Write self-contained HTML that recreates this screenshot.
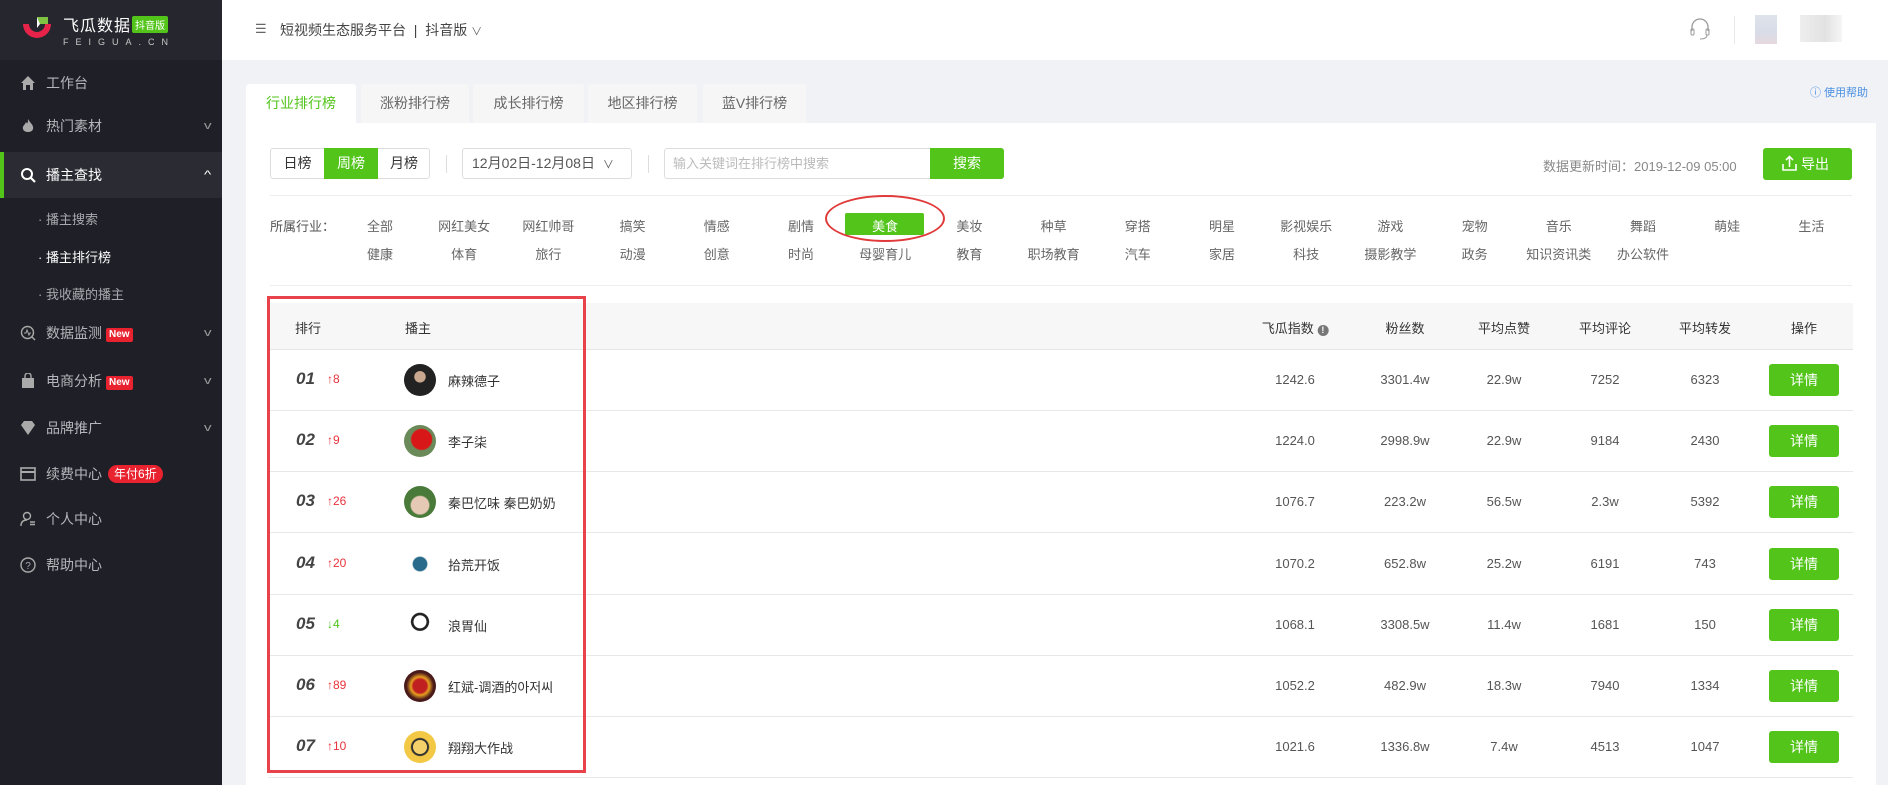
<!DOCTYPE html>
<html><head><meta charset="utf-8"><style>
*{margin:0;padding:0;box-sizing:border-box}
body{width:1888px;height:785px;overflow:hidden;background:#f0f2f5;font-family:"Liberation Sans","Noto Sans CJK SC",sans-serif;font-size:13px;color:#333;position:relative}
.abs{position:absolute}
#side{left:0;top:0;width:222px;height:785px;background:#1f1f27}
#logo{left:0;top:0;width:222px;height:60px;background:#26262e}
.nav{position:absolute;left:0;width:222px;height:46px;color:#b5b5bb;font-size:14px;line-height:46px;padding-left:46px}
.nav .ic{position:absolute;left:20px;top:15px;width:16px;height:16px}
.nav .ar{position:absolute;right:12px;top:0;font-size:11px;color:#999;transform:scaleX(1.4)}
.sub{position:absolute;left:38px;color:#a8a8ae;font-size:13px}
.new{display:inline-block;background:#e8222f;color:#fff;font-size:10px;line-height:14px;padding:0 3px;border-radius:2px;margin-left:4px;vertical-align:1px;font-weight:bold}
#hdr{left:222px;top:0;width:1666px;height:60px;background:#fff}
.tab{position:absolute;top:84px;height:39px;background:#f6f6f7;color:#666;font-size:14px;line-height:39px;text-align:center;border-radius:3px 3px 0 0}
#card{left:246px;top:123px;width:1630px;height:662px;background:#fff}
.ind{position:absolute;font-size:13px;color:#666;transform:translateX(-50%);white-space:nowrap}
.th{position:absolute;top:318px;font-size:13px;color:#333;transform:translateX(-50%);white-space:nowrap}
.row{position:absolute;left:268px;width:1585px;height:61px;border-bottom:1px solid #e8e8e8}
.c{position:absolute;top:22px;font-size:13px;color:#555;transform:translateX(-50%)}
.rk{position:absolute;left:28px;top:19px;font-size:17px;font-weight:bold;font-style:italic;color:#444}
.ch{position:absolute;left:59px;top:22px;font-size:12px;color:#e8323c}
.av{position:absolute;left:136px;top:14px;width:32px;height:32px;border-radius:50%}
.nm{position:absolute;left:180px;top:21px;font-size:13px;color:#333}
.btn{position:absolute;left:1501px;top:14px;width:70px;height:32px;background:#52c41a;color:#fff;border-radius:3px;text-align:center;line-height:32px;font-size:14px}
</style></head><body>
<div id="side" class="abs"></div>
<div id="logo" class="abs">
<svg class="abs" style="left:20px;top:16px" width="34" height="28" viewBox="0 0 34 28"><path d="M3 8 A13.5 13.5 0 0 0 31 8 L25 8 A8 8 0 0 1 9 8 Z" fill="#e8234a"/><path d="M17 1 L28 1 L28 8 L20 8 Z" fill="#7fc242"/><path d="M17 1 L17 12 L20 8Z" fill="#fff"/></svg>
<div class="abs" style="left:63px;top:12px;color:#fff;font-size:16px;letter-spacing:1px">飞瓜数据</div>
<div class="abs" style="left:132px;top:16px;background:#52c41a;color:#fff;font-size:10px;padding:1px 3px;border-radius:2px">抖音版</div>
<div class="abs" style="left:63px;top:37px;color:#c8c8c8;font-size:9px;letter-spacing:7px">FEIGUA.CN</div>
</div>
<div class="nav" style="top:60px"><svg class="ic" viewBox="0 0 16 16"><path d="M8 1 L15 8 L13 8 L13 15 L10 15 L10 10 L6 10 L6 15 L3 15 L3 8 L1 8Z" fill="#aaa"/></svg>工作台</div>
<div class="nav" style="top:103px"><svg class="ic" viewBox="0 0 16 16"><path d="M8 1 C10 5 14 7 13 11 C12 15 4 15 3 11 C2 8 5 7 6 4 C7 6 8 6 8 1Z" fill="#aaa"/></svg>热门素材<span class="ar">v</span></div>
<div class="nav" style="top:152px;background:#2b2b33;color:#fff;border-left:4px solid #52c41a;padding-left:42px"><svg class="ic" style="left:16px" viewBox="0 0 16 16"><circle cx="7" cy="7" r="5" stroke="#fff" stroke-width="2" fill="none"/><path d="M10.5 10.5 L15 15" stroke="#fff" stroke-width="2.2"/></svg><b style="font-weight:normal">播主查找</b><span class="ar" style="color:#fff">^</span></div>
<div class="sub" style="top:209px">· 播主搜索</div>
<div class="sub" style="top:247px;color:#fff">· 播主排行榜</div>
<div class="sub" style="top:284px">· 我收藏的播主</div>
<div class="nav" style="top:310px"><svg class="ic" viewBox="0 0 16 16"><circle cx="7.5" cy="7.5" r="6" stroke="#aaa" stroke-width="1.4" fill="none"/><path d="M4 8 L6 8 L7 5 L9 10 L10 8 L11 8" stroke="#aaa" fill="none"/><path d="M12 12 L15 15" stroke="#aaa" stroke-width="1.4"/></svg>数据监测<span class="new">New</span><span class="ar">v</span></div>
<div class="nav" style="top:358px"><svg class="ic" viewBox="0 0 16 16"><path d="M2 5 L14 5 L14 15 L2 15Z" fill="#aaa"/><path d="M5 5 V3 A3 3 0 0 1 11 3 V5" stroke="#aaa" fill="none" stroke-width="1.4"/></svg>电商分析<span class="new">New</span><span class="ar">v</span></div>
<div class="nav" style="top:405px"><svg class="ic" viewBox="0 0 16 16"><path d="M1 5 L4 1 L12 1 L15 5 L8 15Z" fill="#aaa"/></svg>品牌推广<span class="ar">v</span></div>
<div class="nav" style="top:451px"><svg class="ic" viewBox="0 0 16 16"><rect x="1" y="2" width="14" height="12" stroke="#aaa" stroke-width="1.6" fill="none"/><path d="M1 6 H15" stroke="#aaa" stroke-width="2"/></svg>续费中心<span class="abs" style="top:14px;left:108px;background:#e8222f;color:#fff;font-size:12px;line-height:18px;padding:0 6px;border-radius:9px">年付6折</span></div>
<div class="nav" style="top:496px"><svg class="ic" viewBox="0 0 16 16"><circle cx="7" cy="5" r="3.5" stroke="#aaa" stroke-width="1.4" fill="none"/><path d="M1 15 C1 10 4 9 7 9 M10 11 H15 M10 13.5 H15" stroke="#aaa" stroke-width="1.4" fill="none"/></svg>个人中心</div>
<div class="nav" style="top:542px"><svg class="ic" viewBox="0 0 16 16"><circle cx="8" cy="8" r="7" stroke="#aaa" stroke-width="1.4" fill="none"/><text x="8" y="12" font-size="10" text-anchor="middle" fill="#aaa" font-family="Liberation Sans">?</text></svg>帮助中心</div>

<div id="hdr" class="abs"></div>
<div class="abs" style="left:255px;top:21px;color:#666;font-size:13px">☰</div>
<div class="abs" style="left:280px;top:20px;font-size:14px;color:#444">短视频生态服务平台 &nbsp;|&nbsp; 抖音版 <span style="font-size:11px;color:#666">∨</span></div>
<svg class="abs" style="left:1690px;top:17px" width="20" height="26" viewBox="0 0 20 26"><path d="M2 14 V10 A8 8 0 0 1 18 10 V14" stroke="#999" stroke-width="1.3" fill="none"/><rect x="1" y="12" width="3" height="6" rx="1" stroke="#999" fill="none"/><rect x="16" y="12" width="3" height="6" rx="1" stroke="#999" fill="none"/><path d="M17 18 C17 21 14 22 10 22" stroke="#999" fill="none"/></svg>
<div class="abs" style="left:1734px;top:16px;width:1px;height:28px;background:#e8e8e8"></div>
<div class="abs" style="left:1755px;top:15px;width:22px;height:29px;background:linear-gradient(#dfe3ea,#d8dce8 60%,#e6d8de)"></div>
<div class="abs" style="left:1800px;top:15px;width:42px;height:27px;background:linear-gradient(90deg,#eee,#e2e2e2 60%,#f6f6f6)"></div>
<div class="abs" style="left:1810px;top:84px;font-size:11px;color:#4a90e2">ⓘ 使用帮助</div>

<div class="tab" style="left:246px;width:110px;background:#fff;color:#52c41a">行业排行榜</div>
<div class="tab" style="left:361px;width:108px">涨粉排行榜</div>
<div class="tab" style="left:473px;width:111px">成长排行榜</div>
<div class="tab" style="left:588px;width:109px">地区排行榜</div>
<div class="tab" style="left:703px;width:103px">蓝V排行榜</div>
<div id="card" class="abs"></div>

<div class="abs" style="left:270px;top:148px;width:160px;height:31px;border:1px solid #ddd;border-radius:3px;font-size:14px;line-height:29px">
<span class="abs" style="left:0;width:53px;text-align:center">日榜</span>
<span class="abs" style="left:53px;width:54px;text-align:center;background:#52c41a;color:#fff;height:31px;top:-1px;line-height:31px">周榜</span>
<span class="abs" style="left:107px;width:52px;text-align:center">月榜</span></div>
<div class="abs" style="left:446px;top:155px;width:1px;height:18px;background:#ddd"></div>
<div class="abs" style="left:462px;top:148px;width:170px;height:31px;border:1px solid #ddd;border-radius:3px;font-size:14px;line-height:29px;padding-left:9px;color:#555">12月02日-12月08日 <span style="font-size:11px;margin-left:4px">∨</span></div>
<div class="abs" style="left:648px;top:155px;width:1px;height:18px;background:#ddd"></div>
<div class="abs" style="left:664px;top:148px;width:268px;height:31px;border:1px solid #ddd;border-radius:3px 0 0 3px;font-size:13px;line-height:29px;padding-left:8px;color:#bbb">输入关键词在排行榜中搜索</div>
<div class="abs" style="left:930px;top:148px;width:74px;height:31px;background:#52c41a;color:#fff;font-size:14px;line-height:31px;text-align:center;border-radius:0 3px 3px 0">搜索</div>
<div class="abs" style="left:1543px;top:156px;font-size:13px;color:#888">数据更新时间：2019-12-09 05:00</div>
<div class="abs" style="left:1763px;top:148px;width:89px;height:32px;background:#52c41a;color:#fff;border-radius:3px;font-size:14px;line-height:32px;padding-left:20px"><svg class="abs" style="left:19px;top:7px" width="15" height="16" viewBox="0 0 15 16"><path d="M1 9 V15 H14 V9 M7.5 12 V2 M4 5 L7.5 1.5 L11 5" stroke="#fff" stroke-width="1.6" fill="none"/></svg><span style="margin-left:18px">导出</span></div>
<div class="abs" style="left:270px;top:195px;width:1582px;height:1px;background:#eee"></div>

<div class="abs" style="left:270px;top:216px;font-size:13px;color:#555">所属行业：</div>
<div class="abs" style="left:845px;top:213px;width:79px;height:22px;background:#52c41a;border-radius:2px"></div>
<div class="abs" style="left:825px;top:195px;width:120px;height:47px;border:2px solid #e03a3a;border-radius:50%"></div>
<div id="inds"></div>
<div class="abs" style="left:270px;top:285px;width:1582px;height:1px;background:#eee"></div>

<div class="abs" style="left:268px;top:303px;width:1585px;height:47px;background:#f7f7f7;border-bottom:1px solid #e6e6e6"></div>
<div class="th" style="left:308px">排行</div>
<div class="th" style="left:418px">播主</div>
<div class="th" style="left:1295px">飞瓜指数 <span style="display:inline-block;width:11px;height:11px;border-radius:50%;background:#777;color:#fff;font-size:9px;line-height:11px;text-align:center;font-weight:bold">!</span></div>
<div class="th" style="left:1405px">粉丝数</div>
<div class="th" style="left:1504px">平均点赞</div>
<div class="th" style="left:1605px">平均评论</div>
<div class="th" style="left:1705px">平均转发</div>
<div class="th" style="left:1804px">操作</div>
<div id="rows"></div>
<div class="abs" style="left:267px;top:296px;width:319px;height:477px;border:3px solid #e8424a"></div>
<script>
var r1="全部,网红美女,网红帅哥,搞笑,情感,剧情,美食,美妆,种草,穿搭,明星,影视娱乐,游戏,宠物,音乐,舞蹈,萌娃,生活".split(","),
r2="健康,体育,旅行,动漫,创意,时尚,母婴育儿,教育,职场教育,汽车,家居,科技,摄影教学,政务,知识资讯类,办公软件".split(","),h="";
r1.forEach(function(t,i){h+='<div class="ind" style="left:'+(380+84.2*i)+'px;top:216px'+(i==6?';color:#fff':'')+'">'+t+'</div>'});
r2.forEach(function(t,i){h+='<div class="ind" style="left:'+(380+84.2*i)+'px;top:244px">'+t+'</div>'});
document.getElementById("inds").innerHTML=h;
var d=[["01","↑8","麻辣德子","1242.6","3301.4w","22.9w","7252","6323","#444 radial-gradient(circle at 50% 40%,#c9a88f 0 22%,#222 24%)"],
["02","↑9","李子柒","1224.0","2998.9w","22.9w","9184","2430","radial-gradient(circle at 55% 45%,#d81818 0 40%,#6a8a5a 45%)"],
["03","↑26","秦巴忆味 秦巴奶奶","1076.7","223.2w","56.5w","2.3w","5392","radial-gradient(circle at 50% 60%,#e6c9b5 0 35%,#4a7a3a 40%)"],
["04","↑20","拾荒开饭","1070.2","652.8w","25.2w","6191","743","radial-gradient(circle,#2a6a8a 0 30%,#fff 35%)"],
["05","↓4","浪胃仙","1068.1","3308.5w","11.4w","1681","150","radial-gradient(circle at 50% 40%,#fff 0 25%,#222 27% 35%,#fff 38%)"],
["06","↑89","红斌-调酒的아저씨","1052.2","482.9w","18.3w","7940","1334","radial-gradient(circle,#c02020 0 30%,#e8a020 40%,#4a1a1a 60%)"],
["07","↑10","翔翔大作战","1021.6","1336.8w","7.4w","4513","1047","radial-gradient(circle,#f4d06a 0 30%,#333 32% 38%,#f2c844 42%)"]];
h="";
d.forEach(function(x,i){h+='<div class="row" style="top:'+(350+i*61.2)+'px"><span class="rk">'+x[0]+'</span><span class="ch" style="color:'+(x[1][0]=="↓"?"#52c41a":"#e8323c")+'">'+x[1]+'</span><span class="av" style="background:'+x[8]+'"></span><span class="nm">'+x[2]+'</span>'+
'<span class="c" style="left:1027px">'+x[3]+'</span><span class="c" style="left:1137px">'+x[4]+'</span><span class="c" style="left:1236px">'+x[5]+'</span><span class="c" style="left:1337px">'+x[6]+'</span><span class="c" style="left:1437px">'+x[7]+'</span><span class="btn">详情</span></div>'});
document.getElementById("rows").innerHTML=h;
</script>
</body></html>
